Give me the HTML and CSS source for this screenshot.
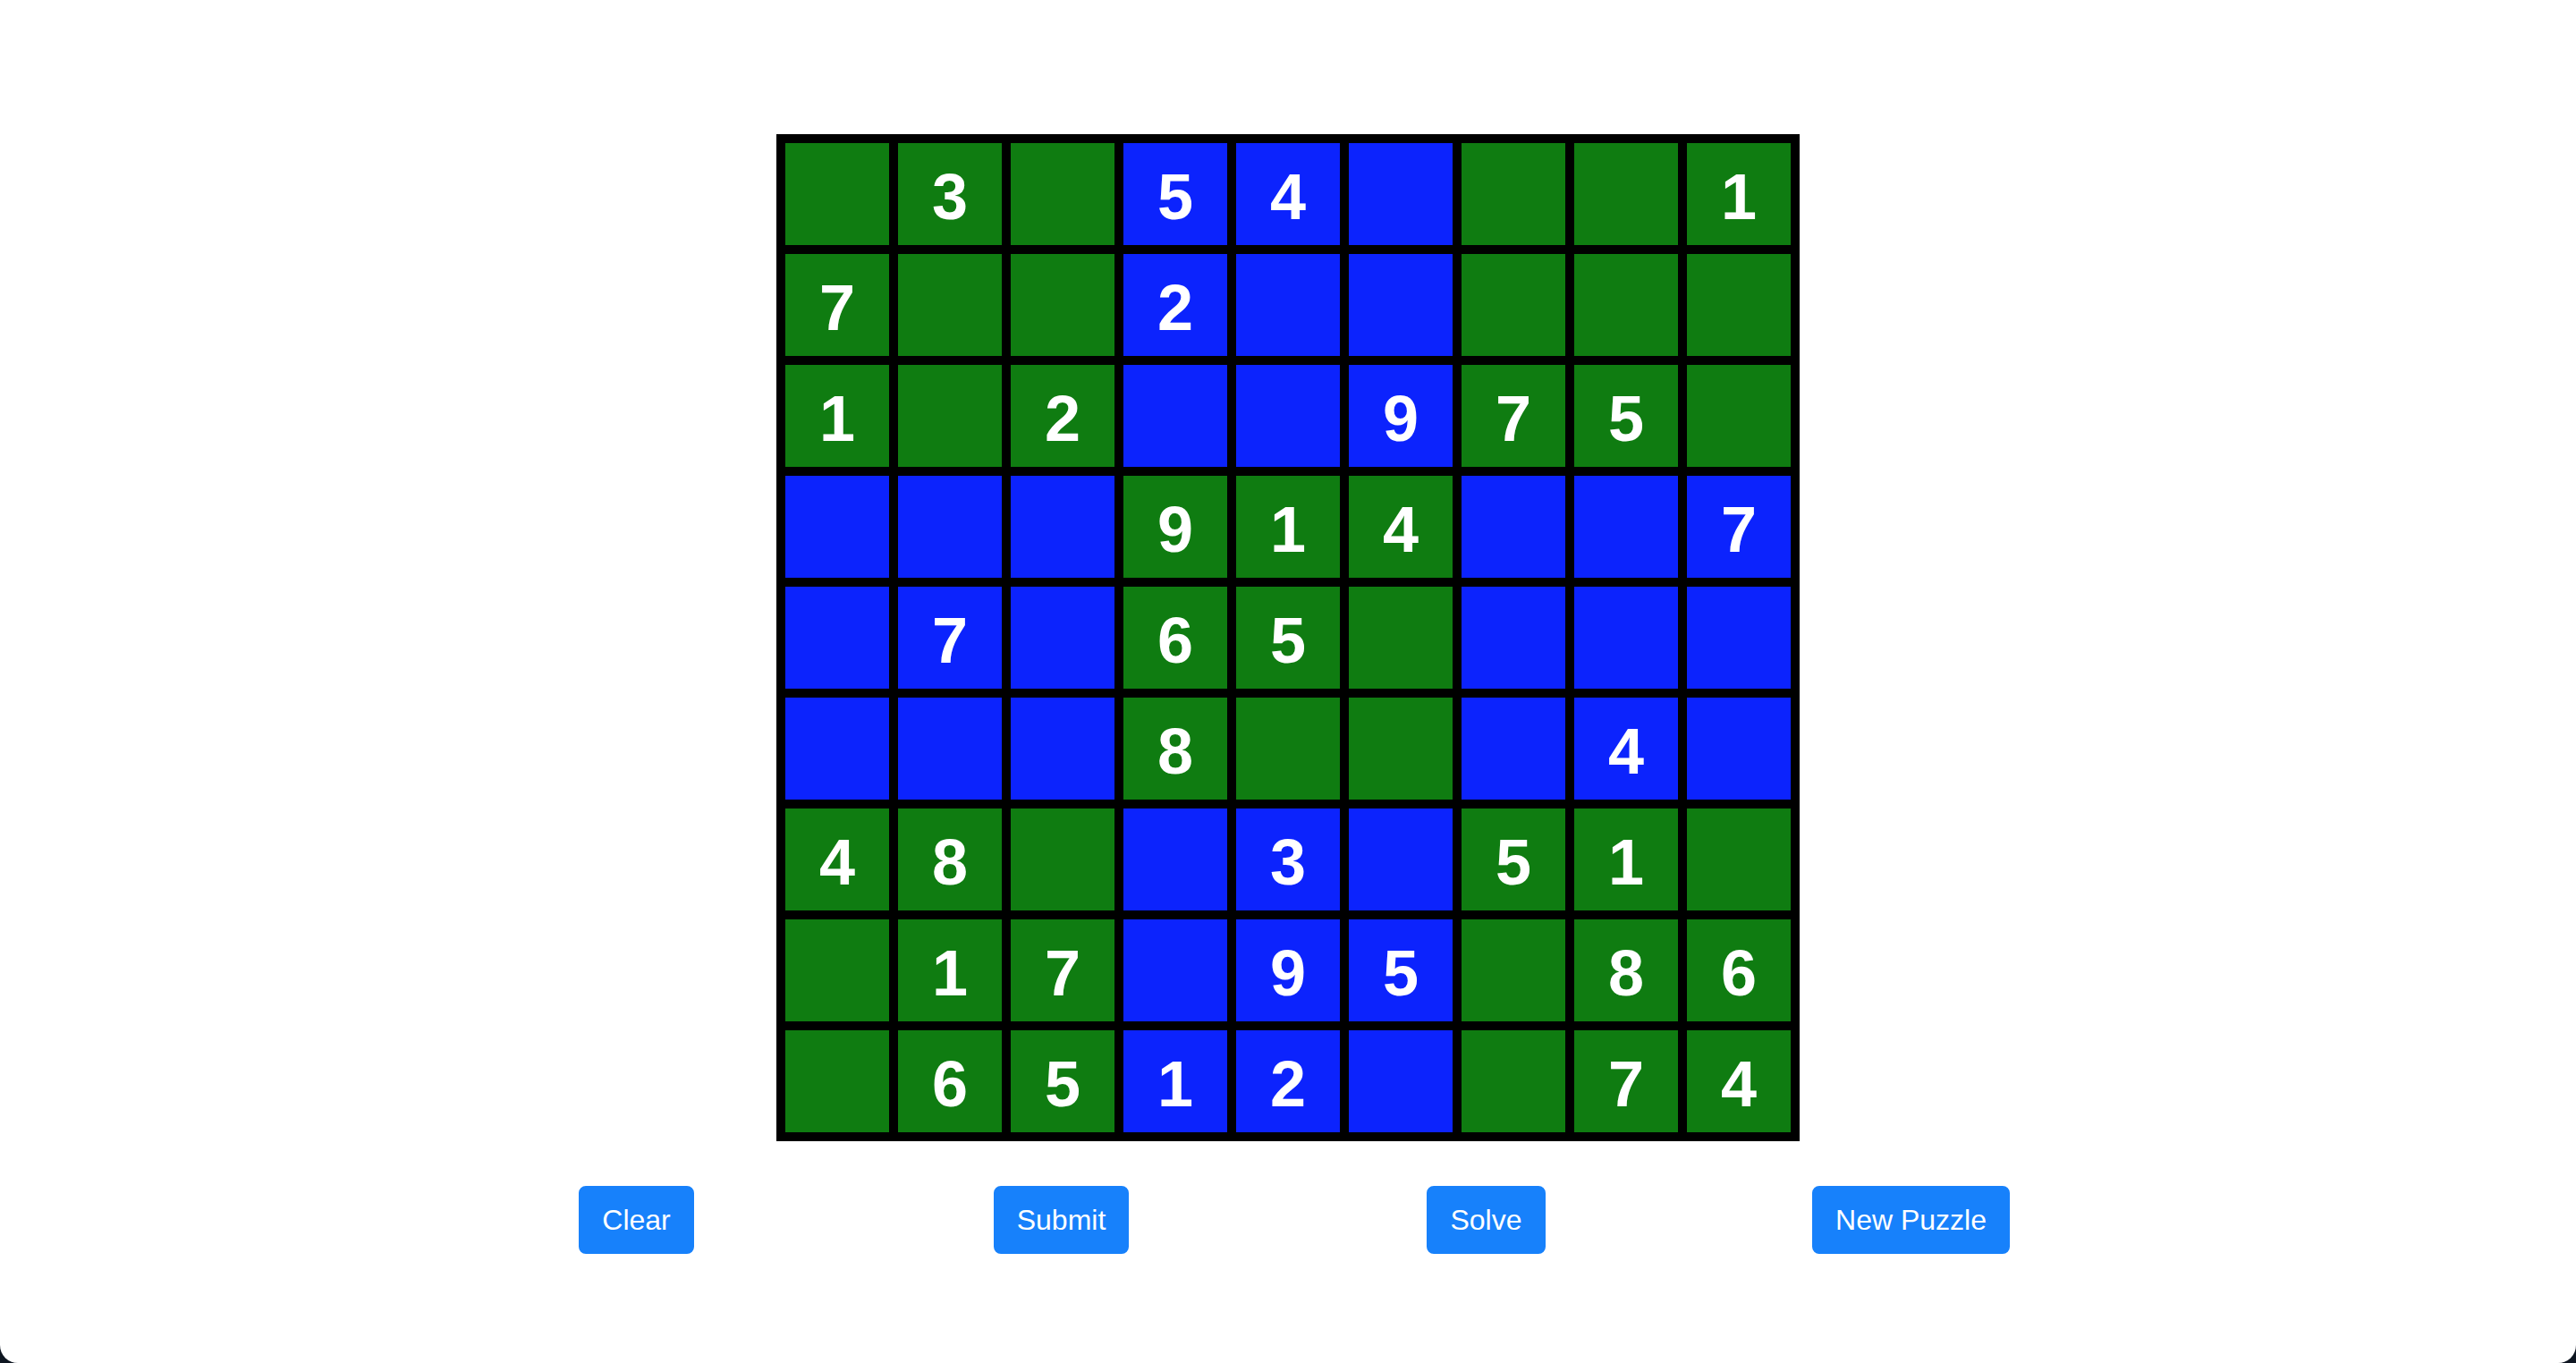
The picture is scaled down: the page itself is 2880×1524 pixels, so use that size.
FILE: index.html
```html
<!DOCTYPE html>
<html lang="en">
<head>
<meta charset="utf-8">
<title>Sudoku</title>
<link rel="stylesheet" href="styles.css">
</head>
<body>
<div class="page">
  <div class="board">
    <div class="cell g"></div><div class="cell g">3</div><div class="cell g"></div><div class="cell b">5</div><div class="cell b">4</div><div class="cell b"></div><div class="cell g"></div><div class="cell g"></div><div class="cell g">1</div>
    <div class="cell g">7</div><div class="cell g"></div><div class="cell g"></div><div class="cell b">2</div><div class="cell b"></div><div class="cell b"></div><div class="cell g"></div><div class="cell g"></div><div class="cell g"></div>
    <div class="cell g">1</div><div class="cell g"></div><div class="cell g">2</div><div class="cell b"></div><div class="cell b"></div><div class="cell b">9</div><div class="cell g">7</div><div class="cell g">5</div><div class="cell g"></div>
    <div class="cell b"></div><div class="cell b"></div><div class="cell b"></div><div class="cell g">9</div><div class="cell g">1</div><div class="cell g">4</div><div class="cell b"></div><div class="cell b"></div><div class="cell b">7</div>
    <div class="cell b"></div><div class="cell b">7</div><div class="cell b"></div><div class="cell g">6</div><div class="cell g">5</div><div class="cell g"></div><div class="cell b"></div><div class="cell b"></div><div class="cell b"></div>
    <div class="cell b"></div><div class="cell b"></div><div class="cell b"></div><div class="cell g">8</div><div class="cell g"></div><div class="cell g"></div><div class="cell b"></div><div class="cell b">4</div><div class="cell b"></div>
    <div class="cell g">4</div><div class="cell g">8</div><div class="cell g"></div><div class="cell b"></div><div class="cell b">3</div><div class="cell b"></div><div class="cell g">5</div><div class="cell g">1</div><div class="cell g"></div>
    <div class="cell g"></div><div class="cell g">1</div><div class="cell g">7</div><div class="cell b"></div><div class="cell b">9</div><div class="cell b">5</div><div class="cell g"></div><div class="cell g">8</div><div class="cell g">6</div>
    <div class="cell g"></div><div class="cell g">6</div><div class="cell g">5</div><div class="cell b">1</div><div class="cell b">2</div><div class="cell b"></div><div class="cell g"></div><div class="cell g">7</div><div class="cell g">4</div>
  </div>
  <div class="controls">
    <button class="btn">Clear</button>
    <button class="btn">Submit</button>
    <button class="btn">Solve</button>
    <button class="btn">New Puzzle</button>
  </div>
</div>
</body>
</html>
```
FILE: styles.css
```css
html {
  background: #0e1621;
  height: 100%;
}
body {
  margin: 0;
  height: 100%;
}
.page {
  background: #ffffff;
  height: 100%;
  box-sizing: border-box;
  border-radius: 0 0 20px 20px;
  padding-top: 150px;
  overflow: hidden;
}
.board {
  width: 1144px;
  box-sizing: border-box;
  margin: 0 auto;
  padding: 10px;
  background: #000000;
  display: grid;
  grid-template-columns: repeat(9, 116px);
  grid-auto-rows: 114px;
  gap: 10px;
}
.cell {
  font-family: "Liberation Sans", Arial, sans-serif;
  font-weight: 700;
  font-size: 72px;
  line-height: 120px;
  text-align: center;
  color: #ffffff;
  overflow: hidden;
}
.g { background: #0f7c11; }
.b { background: #0c23fd; }
.controls {
  margin-top: 50px;
  margin-left: 474px;
  width: 1900px;
  display: grid;
  grid-template-columns: repeat(4, 1fr);
  justify-items: center;
}
.btn {
  font-family: "Liberation Sans", Arial, sans-serif;
  font-size: 32px;
  line-height: 48px;
  color: #ffffff;
  background: #1781fb;
  border: 2px solid #1781fb;
  border-radius: 8px;
  padding: 12px 24px;
  cursor: pointer;
}
```
